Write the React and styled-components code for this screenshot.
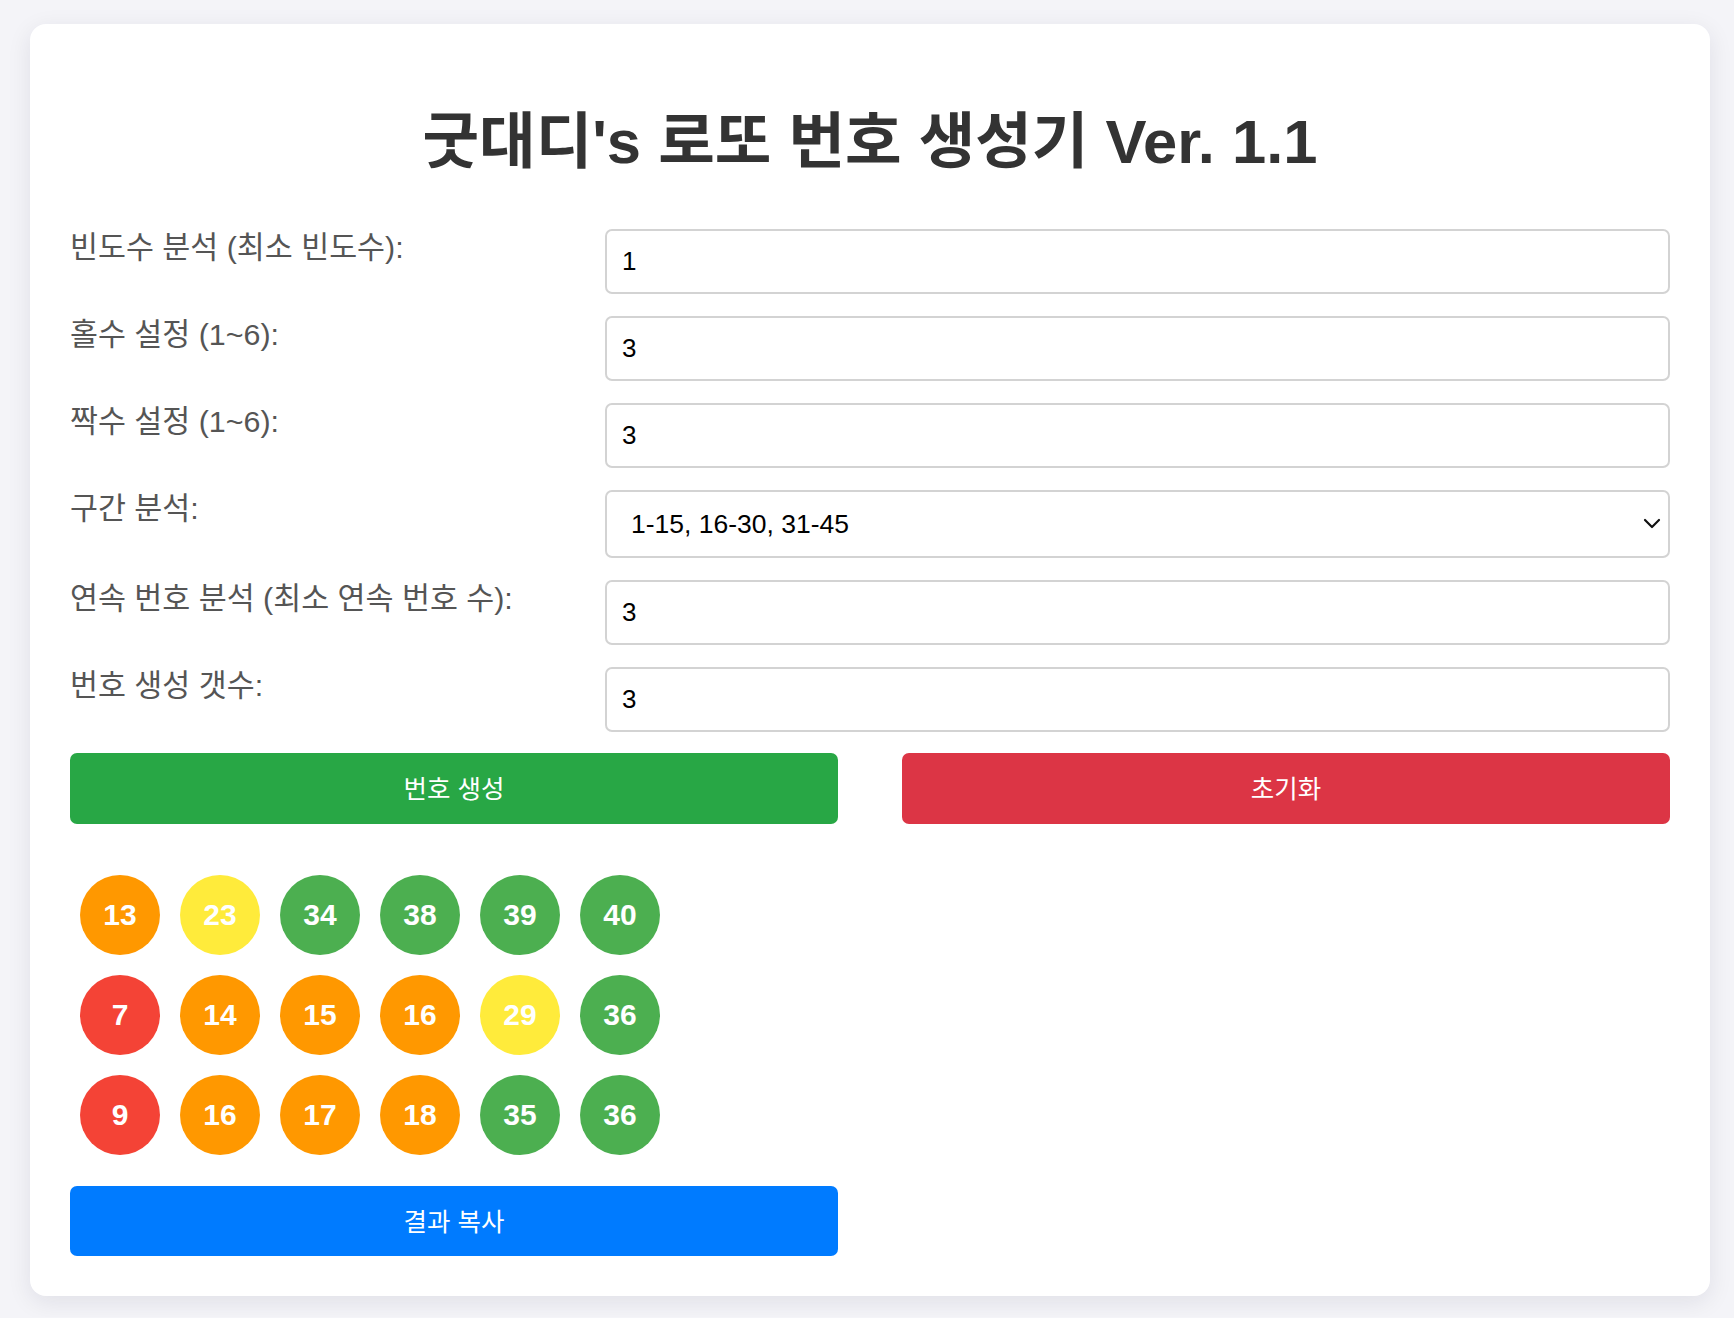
import React from "react";
import styled, { createGlobalStyle } from "styled-components";

// page base
const GlobalStyle = createGlobalStyle`
  html, body {
    margin: 0;
    padding: 0;
    background-color: #f4f4f8;
    font-family: "Liberation Sans", "Noto Sans CJK KR", sans-serif;
  }
  * {
    box-sizing: border-box;
  }
`;

const Page = styled.div`
  padding: 24px 24px 21px 30px;
`;

const Card = styled.div`
  background: #ffffff;
  border-radius: 16px;
  padding: 40px;
  box-shadow: 0 6px 24px rgba(20, 20, 60, 0.09);
`;

const Title = styled.h1`
  margin: 38px 0 47px;
  font-size: 61.5px;
  line-height: 80px;
  font-weight: 700;
  color: #333333;
  text-align: center;
`;

const Form = styled.div`
  display: grid;
  row-gap: 22px;
`;

const FieldRow = styled.div`
  display: grid;
  grid-template-columns: 535px 1fr;
  align-items: start;
`;

const Label = styled.label`
  padding-top: 1px;
  font-size: 30.4px;
  line-height: 34px;
  color: #555555;
`;

const Input = styled.input`
  width: 100%;
  height: 65px;
  padding: 0 15px;
  border: 2px solid #d3d3d3;
  border-radius: 7px;
  font-family: "Liberation Sans", sans-serif;
  font-size: 26px;
  color: #000000;
  background: #ffffff;
  outline: none;
`;

const SelectWrap = styled.div`
  position: relative;
`;

const Select = styled.select`
  width: 100%;
  height: 68px;
  padding: 0 50px 0 24px;
  border: 2px solid #d3d3d3;
  border-radius: 7px;
  font-family: "Liberation Sans", sans-serif;
  font-size: 26.5px;
  color: #000000;
  background: #ffffff;
  appearance: none;
  outline: none;
`;

const Chevron = styled.svg`
  position: absolute;
  right: 9px;
  top: 28px;
  pointer-events: none;
`;

const ButtonRow = styled.div`
  display: flex;
  justify-content: space-between;
  margin-top: 21px;
`;

const colors = {
  green: "#28a745",
  red: "#dc3545",
  blue: "#007bff",
};

const ActionButton = styled.button`
  width: 48%;
  height: ${(p) => p.$h || 71}px;
  padding: 0 0 4px;
  border: none;
  border-radius: 7px;
  background: ${(p) => colors[p.$tone]};
  color: #ffffff;
  font-family: "Liberation Sans", "Noto Sans CJK KR", sans-serif;
  font-size: 25.5px;
  cursor: pointer;
`;

const Results = styled.div`
  margin-top: 41px;
  display: flex;
  flex-direction: column;
`;

const BallRow = styled.div`
  display: flex;
`;

const ballColor = (n) => {
  if (n <= 10) return "#f44336";
  if (n <= 20) return "#ff9800";
  if (n <= 30) return "#ffeb3b";
  if (n <= 40) return "#4caf50";
  return "#2196f3";
};

const Ball = styled.div`
  width: 80px;
  height: 80px;
  margin: 10px;
  border-radius: 50%;
  background: ${(p) => ballColor(p.$n)};
  color: #ffffff;
  display: flex;
  align-items: center;
  justify-content: center;
  font-family: "Liberation Sans", sans-serif;
  font-size: 30px;
  font-weight: 700;
`;

const CopyRow = styled.div`
  margin-top: 21px;
`;

const fields = [
  { label: "빈도수 분석 (최소 빈도수):", value: "1" },
  { label: "홀수 설정 (1~6):", value: "3" },
  { label: "짝수 설정 (1~6):", value: "3" },
  { label: "구간 분석:", select: true },
  { label: "연속 번호 분석 (최소 연속 번호 수):", value: "3" },
  { label: "번호 생성 갯수:", value: "3" },
];

const results = [
  [13, 23, 34, 38, 39, 40],
  [7, 14, 15, 16, 29, 36],
  [9, 16, 17, 18, 35, 36],
];

const App = () => {
  return (
    <>
      <GlobalStyle />
      <Page>
        <Card>
          <Title>굿대디's 로또 번호 생성기 Ver. 1.1</Title>
          <Form>
            {fields.map((f) => (
              <FieldRow key={f.label}>
                <Label>{f.label}</Label>
                {f.select ? (
                  <SelectWrap>
                    <Select defaultValue="a">
                      <option value="a">1-15, 16-30, 31-45</option>
                      <option value="b">1-9, 10-19, 20-29, 30-39, 40-45</option>
                    </Select>
                    <Chevron width="18" height="11" viewBox="0 0 18 11">
                      <path
                        d="M2 2 L9 9 L16 2"
                        fill="none"
                        stroke="#111"
                        strokeWidth="2.2"
                        strokeLinecap="round"
                        strokeLinejoin="round"
                      />
                    </Chevron>
                  </SelectWrap>
                ) : (
                  <Input type="number" defaultValue={f.value} />
                )}
              </FieldRow>
            ))}
          </Form>
          <ButtonRow>
            <ActionButton $tone="green">번호 생성</ActionButton>
            <ActionButton $tone="red">초기화</ActionButton>
          </ButtonRow>
          <Results>
            {results.map((row, i) => (
              <BallRow key={i}>
                {row.map((n, j) => (
                  <Ball key={j} $n={n}>
                    {n}
                  </Ball>
                ))}
              </BallRow>
            ))}
          </Results>
          <CopyRow>
            <ActionButton $tone="blue" $h={70}>
              결과 복사
            </ActionButton>
          </CopyRow>
        </Card>
      </Page>
    </>
  );
};

export default App;
